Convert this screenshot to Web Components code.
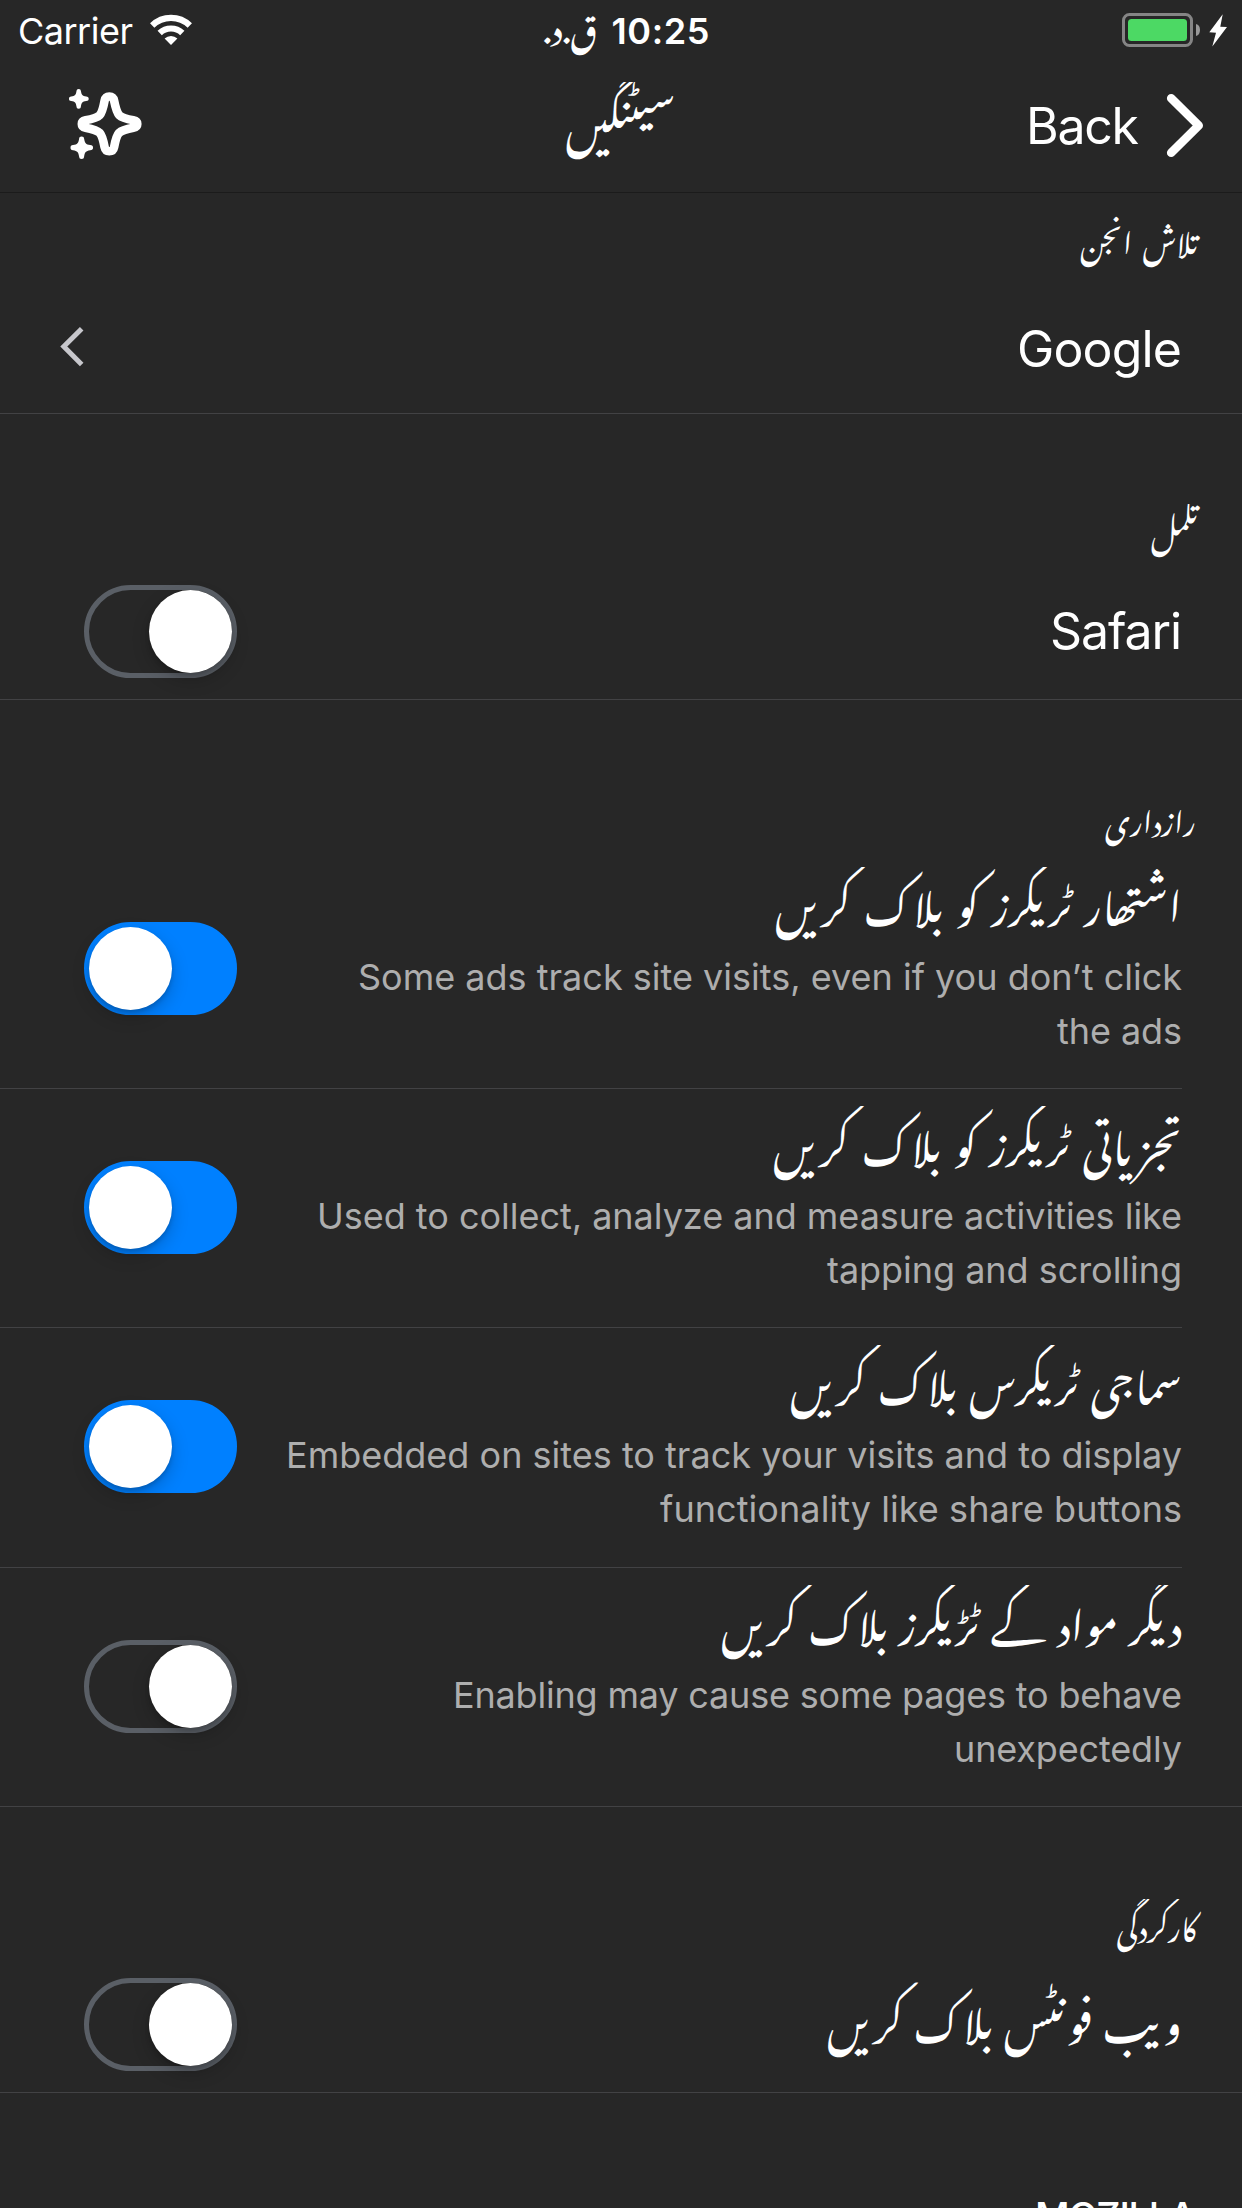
<!DOCTYPE html>
<html lang="ur">
<head>
<meta charset="utf-8">
<title>Settings</title>
<style>
html,body{margin:0;background:#272727}
body{width:1242px;height:2208px;overflow:hidden;color:#fff;font-family:Inter,"Liberation Sans",sans-serif}
</style>
</head>
<body>
<settings-screen></settings-screen>
<script>
const define = (name, html, setup) => {
  const t = document.createElement('template');
  t.innerHTML = html;
  customElements.define(name, class extends HTMLElement {
    constructor(){ super(); this.attachShadow({mode:'open'}).appendChild(t.content.cloneNode(true)); }
    connectedCallback(){ if (setup) setup(this, this.shadowRoot); }
  });
};

/* Latin line with its tracking set so that it fills the given width */
define('latin-text', `<style>
:host{display:block;flex:none;direction:ltr;white-space:nowrap;line-height:54px;height:54px}
span{display:inline-block}
</style><span><slot></slot></span>`, (el, r) => {
  const w = +el.getAttribute('w'), s = r.querySelector('span');
  el.style.width = w + 'px';
  s.style.letterSpacing = (w - s.getBoundingClientRect().width) / (el.textContent.length - 1) + 'px';
});

/* Urdu line in Nastaliq; its word gaps grow to fill the given width */
define('urdu-text', `<style>
:host{display:block;flex:none;direction:rtl;white-space:nowrap;font-family:"Noto Nastaliq Urdu","Noto Naskh Arabic","Noto Sans Arabic","DejaVu Sans",sans-serif;line-height:80px;height:80px;clip-path:inset(var(--cut,0px) -20px -30px -20px)}
span{display:inline-block}
</style><span><slot></slot></span>`, (el, r) => {
  const w = +el.getAttribute('w'), s = r.querySelector('span');
  el.style.width = w + 'px';
  const gaps = el.textContent.split(' ').length - 1;
  if (gaps) s.style.wordSpacing = (w - s.getBoundingClientRect().width) / gaps + 'px';
});

define('toggle-switch', `<style>
:host{display:flex;flex:none;box-sizing:border-box;width:153px;height:93px;border:5px solid #5a5f66;border-radius:47px;justify-content:flex-start;direction:rtl}
:host([on]){background:#0080ff;border-color:#0080ff;justify-content:flex-end}
i{width:83px;height:83px;border-radius:50%;background:#fff;box-shadow:0 7px 18px rgba(0,0,0,.2),0 3px 4px rgba(0,0,0,.15)}
</style><i></i>`);

define('status-bar', `<style>
:host{display:grid;grid-template-columns:1fr auto 1fr;height:60px;direction:ltr;font-size:36px}
.l{display:flex;padding-left:18px;gap:17px}.l latin-text{margin-top:4px}.l svg{margin-top:14px}
.c{display:flex;gap:14px;padding-left:12px}.c latin-text{margin-top:4px;font-weight:600}.c urdu-text{font-size:31px;height:60px;line-height:60px;margin-top:-6px;font-weight:600}
.r{display:flex;justify-content:flex-end;padding-right:14px;padding-top:13px}
</style>
<div class="l"><latin-text w="115">Carrier</latin-text>
<svg width="42" height="32" viewBox="0 0 42 32" fill="none" stroke="#fff" stroke-width="6.2"><path d="M2.2 11.5A27 27 0 0 1 39.8 11.5"/><path d="M9.7 19A16.4 16.4 0 0 1 32.3 19"/><path d="M14.6 24.5A9.2 9.2 0 0 1 27.4 24.5L21 31Z" fill="#fff" stroke="none"/></svg></div>
<div class="c"><urdu-text w="53">ق.د.</urdu-text><latin-text w="98">10:25</latin-text></div>
<div class="r"><svg width="106" height="36" viewBox="1122 13 106 36"><rect x="1123.5" y="14.5" width="68" height="31" rx="6" fill="none" stroke="#858585" stroke-width="3"/><rect x="1128" y="19" width="59" height="22" rx="3.5" fill="#4cd964"/><path d="M1196 24Q1200 25 1200 30T1196 36Z" fill="#999"/><path d="M1222.7 14.3L1209.3 32.3L1216 32.7L1212.3 46.5L1227 27L1220.3 26.7Z" fill="#fff"/></svg></div>`);

define('nav-bar', `<style>
:host{display:grid;grid-template-columns:1fr auto 1fr;height:132px;border-bottom:1px solid #1b1b1b;direction:ltr;font-size:50px}
.l{padding:26px 0 0 66px}.c urdu-text{font-size:42px;margin-top:18px;--cut:4px}
.r{display:flex;justify-content:flex-end;gap:27px;padding:33px 36px 0 0}.r latin-text{margin-top:6px}
</style>
<div class="l"><svg width="80" height="80" viewBox="66 86 80 80"><path d="M109.3 96.5c3 0 4.3 1.700 4.800 4.200c1.600 8 3.200 12.500 5.200 14.600c2.300 2.300 7 3.800 14 5c2.500 .5 4 1.800 4 3.600s-1.500 3.300-4 3.800c-8 1.500-12 3-14.200 5.100c-2.100 2.200-3.600 7-5 14.400c-.5 2.500-1.800 4-4.800 4s-4.200-1.500-4.700-4c-1.400-7.400-2.900-12.200-5-14.400c-2.200-2.200-7-3.700-14-5.100c-2.500-.5-3.800-2-3.800-3.800s1.300-3.100 3.800-3.600c7-1.200 11.700-2.700 14-5c2-2.100 3.500-6.600 5-14.600c.5-2.500 1.700-4.200 4.700-4.200z" fill="none" stroke="#fff" stroke-width="8.6"/><path id="s" d="M78.700 89c1.500 0 2 .7 2.200 2c.7 3.800 1.400 5 5.300 5.500c1.700 .2 2.500 .8 2.500 2.300s-.8 2.100-2.500 2.300c-3.900 .6-4.700 1.700-5.300 5.500c-.2 1.500-.7 2.200-2.200 2.200s-2-.7-2.200-2.200c-.6-3.800-1.400-4.900-5.300-5.500c-1.600-.2-2.200-.8-2.200-2.300s.6-2.100 2.200-2.300c3.900-.5 4.700-1.700 5.300-5.500c.2-1.300 .7-2 2.200-2z" fill="#fff"/><use href="#s" transform="translate(-8.500 34.500) scale(1.145)"/></svg></div>
<div class="c"><urdu-text w="109">سیٹنگیں</urdu-text></div>
<div class="r"><latin-text w="113">Back</latin-text><svg width="40" height="66" viewBox="1166 94 40 66"><path d="M1171.200 99.200L1198.700 126.500L1171.200 153.800" fill="none" stroke="#fff" stroke-width="8.600" stroke-linecap="round" stroke-linejoin="round"/></svg></div>`);

define('section-heading', `<style>
:host{display:flex;flex:none;box-sizing:border-box;height:150px;direction:rtl;padding:var(--top,74px) var(--side,44px) 0 0;font-size:36px}
</style><slot></slot>`);

define('setting-row', `<style>
:host{display:flex;flex:none;box-sizing:border-box;justify-content:space-between;align-items:center;direction:rtl;height:136px;padding:0 60px 0 84px;font-size:50px;border-bottom:1px solid #424244}
:host([chevron]){height:131px;padding-left:59px}
:host([tracker]){height:239px;padding-bottom:1px}
:host([inset]){border-bottom:0;background:linear-gradient(#424244,#424244) 0 100%/1182px 1px no-repeat;padding-bottom:2px}
:host([tall]){height:240px;padding-bottom:3px}
:host([first]){padding-bottom:1px}
.t{display:flex;flex-direction:column}
:host([tracker]) .t{align-self:flex-start}
</style><div class="t"><slot></slot></div><slot name="control"></slot>`);

define('row-note', `<style>
:host{display:block;font-size:36px;color:#aeaeae}
</style><slot></slot>`);

define('settings-screen', `<style>
:host{display:flex;flex-direction:column;width:1242px;height:2208px;overflow:hidden;background:#272727}
setting-row>urdu-text{font-size:42px;--cut:7px;margin-bottom:18px}
setting-row[tracker]>urdu-text{height:100px;line-height:100px;--cut:17px;margin-bottom:0}
setting-row[first]>urdu-text{height:101px;--cut:18px}
section-heading>urdu-text{font-size:30px;--cut:16px}
.first{height:90px;--top:5px}
.privacy{height:149px;--top:77px;--side:46px}
.privacy urdu-text{height:60px;line-height:80px}
.speed{--top:76px;--side:45px}
.google{margin-top:2px}
.safari{margin-bottom:1px}
.chev{margin-bottom:2px}
.last{height:115px;--top:96px;--side:46px;font-weight:500}
.last latin-text{font-size:38px}
</style>
<status-bar></status-bar>
<nav-bar></nav-bar>
<section-heading class="first"><urdu-text w="118">تلاش انجن</urdu-text></section-heading>
<setting-row chevron><latin-text class="google" w="165">Google</latin-text><svg class="chev" slot="control" width="26" height="44" viewBox="59 325 26 44"><path d="M81.700 328.700L63.800 346.600L81.700 364.500" fill="none" stroke="#c7c7cc" stroke-width="5"/></svg></setting-row>
<section-heading><urdu-text w="49">تلمل</urdu-text></section-heading>
<setting-row><latin-text class="safari" w="132">Safari</latin-text><toggle-switch slot="control"></toggle-switch></setting-row>
<section-heading class="privacy"><urdu-text w="89">رازداری</urdu-text></section-heading>
<setting-row tracker tall inset first><urdu-text w="407">اشتھار ٹریکرز کو بلاک کریں</urdu-text><row-note><latin-text w="824">Some ads track site visits, even if you don’t click</latin-text><latin-text w="125">the ads</latin-text></row-note><toggle-switch on slot="control"></toggle-switch></setting-row>
<setting-row tracker inset><urdu-text w="409">تجزیاتی ٹریکرز کو بلاک کریں</urdu-text><row-note><latin-text w="865">Used to collect, analyze and measure activities like</latin-text><latin-text w="355">tapping and scrolling</latin-text></row-note><toggle-switch on slot="control"></toggle-switch></setting-row>
<setting-row tracker tall inset><urdu-text w="392">سماجی ٹریکرس بلاک کریں</urdu-text><row-note><latin-text w="896">Embedded on sites to track your visits and to display</latin-text><latin-text w="522">functionality like share buttons</latin-text></row-note><toggle-switch on slot="control"></toggle-switch></setting-row>
<setting-row tracker><urdu-text w="461">دیگر مواد کے ٹڑیکرز بلاک کریں</urdu-text><row-note><latin-text w="729">Enabling may cause some pages to behave</latin-text><latin-text w="228">unexpectedly</latin-text></row-note><toggle-switch slot="control"></toggle-switch></setting-row>
<section-heading class="speed"><urdu-text w="82">کارکردگی</urdu-text></section-heading>
<setting-row><urdu-text w="355">ویب فونٹس بلاک کریں</urdu-text><toggle-switch slot="control"></toggle-switch></setting-row>
<section-heading class="last"><latin-text w="161">MOZILLA</latin-text></section-heading>`);
</script>
</body>
</html>
